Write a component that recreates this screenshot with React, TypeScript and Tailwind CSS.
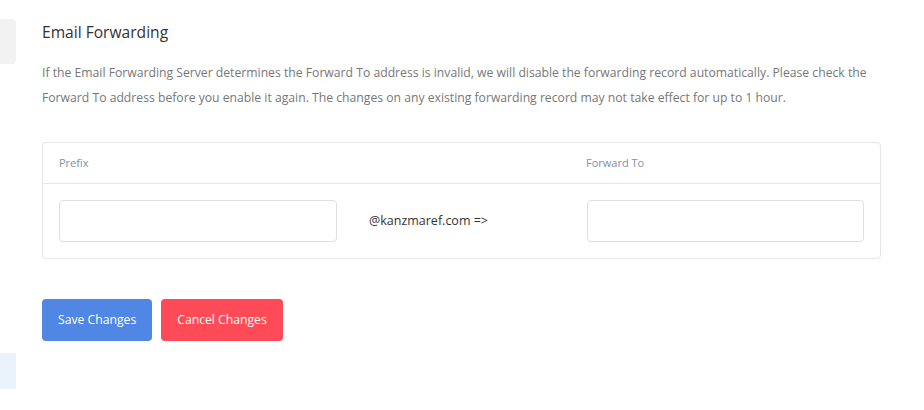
export default function App() {
  return (
    <div className="flex h-[410px] w-[924px] bg-white font-['Open_Sans',sans-serif]">
      {/* sidebar edge */}
      <div className="flex w-4 shrink-0 flex-col">
        <div className="mt-[19px] h-[45px] rounded-r bg-[#f2f2f2]" />
        <div className="mt-[289px] h-[36px] bg-[#eaf2fc]" />
      </div>

      <div className="ml-[26px] w-[839px] pt-[22px]">
        <h2 className="text-[15.6px] leading-[20px] text-[#333]">Email Forwarding</h2>
        <p className="mt-[18px] text-[12.2px] leading-[25px] text-[#777]">
          If the Email Forwarding Server determines the Forward To address is invalid, we will disable the forwarding record automatically. Please check the Forward To address before you enable it again. The changes on any existing forwarding record may not take effect for up to 1 hour.
        </p>

        <div className="mt-[32px] rounded border border-[#e3e6ea]">
          <div className="grid h-[41px] grid-cols-[310px_218px_1fr] items-center border-b border-[#e3e6ea] text-[11px] text-[#8391a7]">
            <div className="pl-4">Prefix</div>
            <div />
            <div className="pl-[15px]">Forward To</div>
          </div>
          <div className="grid grid-cols-[310px_218px_1fr] items-center py-4">
            <div className="px-4">
              <input className="h-[42px] w-full rounded-sm border border-[#dcdfe3] outline-none" />
            </div>
            <div className="px-4 text-[12.5px] text-[#333]">@kanzmaref.com =&gt;</div>
            <div className="px-4">
              <input className="h-[42px] w-full rounded-sm border border-[#dcdfe3] outline-none" />
            </div>
          </div>
        </div>

        <div className="mt-[40px] flex gap-[9px]">
          <button className="h-[42px] rounded bg-[#5087e5] px-4 text-[12.2px] text-white">Save Changes</button>
          <button className="h-[42px] rounded bg-[#ff4b57] px-4 text-[12.2px] text-white">Cancel Changes</button>
        </div>
      </div>
    </div>
  );
}
